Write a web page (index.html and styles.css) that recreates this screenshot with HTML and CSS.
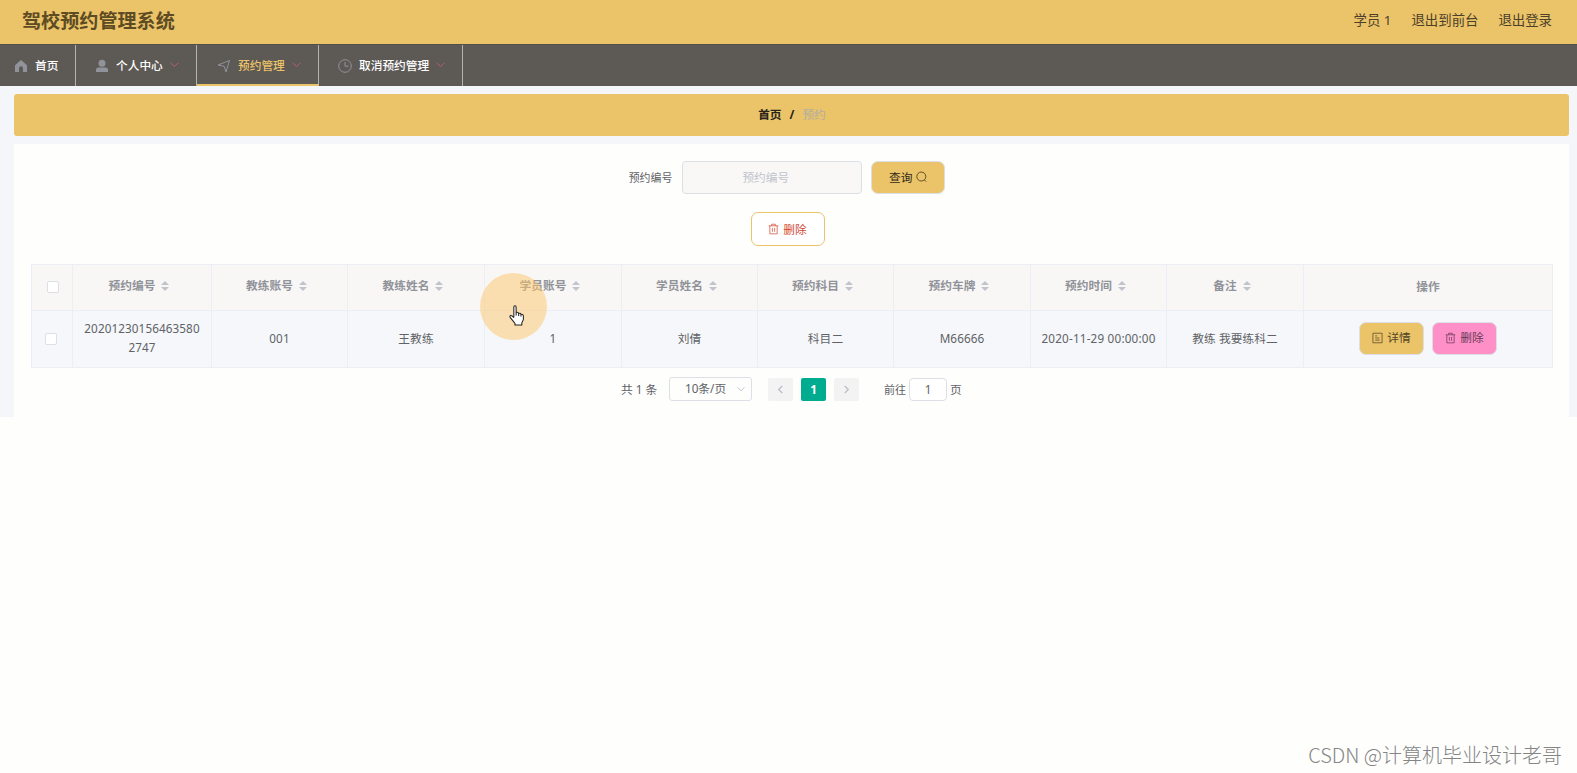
FILE: index.html
```
<!DOCTYPE html>
<html lang="zh-CN">
<head>
  <meta charset="UTF-8" />
  <title>驾校预约管理系统</title>
  <meta name="viewport" content="width=device-width, initial-scale=1" />
  <link rel="stylesheet" href="styles.css">
</head>
<body>
  <!-- Shared icons -->
  <svg class="sprite">
    <symbol id="i-trash" viewBox="0 0 12 12"><path d="M.8 2.500h10.400M4 2.500V.8h4v1.700M2 2.500V11.300h8V2.500M4.800 4.800v4.200M7.200 4.800v4.200"/></symbol>
    <symbol id="i-down" viewBox="0 0 10 10"><path d="M.7 3L5 7.300 9.300 3"/></symbol>
    <symbol id="i-sort" viewBox="0 0 8 10"><path d="M4 0l4 4H0zM4 10l4-4H0z"/></symbol>
  </svg>

  <header class="top">
    <h1>驾校预约管理系统</h1>
    <div class="user">
      <span>学员 1</span>
      <span>退出到前台</span>
      <span>退出登录</span>
    </div>
  </header>

  <nav class="menu">
    <a class="item home">
      <svg class="ico solid" viewBox="0 0 14 14"><path d="M7 1L1 6.300V13h4V9.200a2 2 0 0 1 4 0V13h4V6.300z"/></svg>
      <span>首页</span>
    </a>
    <a class="item person">
      <svg class="ico solid" viewBox="0 0 14 14"><circle cx="7" cy="4.200" r="3.500"/><path d="M1 13v-2q0-2.500 2.500-2.500h7Q13 8.500 13 11v2z"/></svg>
      <span>个人中心</span>
      <svg class="arrow"><use href="#i-down"/></svg>
    </a>
    <a class="item active">
      <svg class="ico" viewBox="0 0 14 14"><path d="M1 6L12.500 1.500 9 13 7.200 7.300z"/></svg>
      <span>预约管理</span>
      <svg class="arrow"><use href="#i-down"/></svg>
    </a>
    <a class="item cancel">
      <svg class="ico" viewBox="0 0 14 14"><circle cx="7" cy="7" r="6.300"/><path d="M7 3v4.200h3.600"/></svg>
      <span>取消预约管理</span>
      <svg class="arrow"><use href="#i-down"/></svg>
    </a>
  </nav>

  <main class="main">
    <div class="crumb"><b>首页</b><b>/</b><span>预约</span></div>

    <section class="panel">
      <div class="search">
        <label for="no">预约编号</label>
        <input id="no" placeholder="预约编号" />
        <button class="btn">查询 <svg class="find" viewBox="0 0 12 12"><circle cx="5.800" cy="5.500" r="4.900"/><path d="M9.300 9.300l1.700 1.700"/></svg></button>
      </div>
      <div class="tools">
        <button class="btn outline"><svg><use href="#i-trash"/></svg> 删除</button>
      </div>

      <table>
        <colgroup>
          <col class="c-check"><col class="c-no"><col class="c-136"><col class="c-137"><col class="c-137"><col class="c-136"><col class="c-136"><col class="c-137"><col class="c-136"><col class="c-137"><col>
        </colgroup>
        <thead>
          <tr>
            <th><i class="check"></i></th>
            <th>预约编号<svg><use href="#i-sort"/></svg></th>
            <th>教练账号<svg><use href="#i-sort"/></svg></th>
            <th>教练姓名<svg><use href="#i-sort"/></svg></th>
            <th>学员账号<svg><use href="#i-sort"/></svg></th>
            <th>学员姓名<svg><use href="#i-sort"/></svg></th>
            <th>预约科目<svg><use href="#i-sort"/></svg></th>
            <th>预约车牌<svg><use href="#i-sort"/></svg></th>
            <th>预约时间<svg><use href="#i-sort"/></svg></th>
            <th>备注<svg><use href="#i-sort"/></svg></th>
            <th>操作</th>
          </tr>
        </thead>
        <tbody>
          <tr>
            <td><i class="check"></i></td>
            <td>202012301564635802747</td>
            <td>001</td>
            <td>王教练</td>
            <td>1</td>
            <td>刘倩</td>
            <td>科目二</td>
            <td>M66666</td>
            <td class="time">2020-11-29 00:00:00</td>
            <td>教练 我要练科二</td>
            <td>
              <div class="ops">
                <button class="btn small"><svg viewBox="0 0 12 12"><path d="M1 .8h10v10.400H1zM3.500 3.700h2M3.500 6h4.500M3.500 8.300h5"/></svg> 详情</button>
                <button class="btn small pink"><svg><use href="#i-trash"/></svg> 删除</button>
              </div>
            </td>
          </tr>
        </tbody>
      </table>

      <div class="pager">
        <span class="total">共 1 条</span>
        <div class="size"><span>10条/页</span><svg><use href="#i-down"/></svg></div>
        <button class="page"><svg viewBox="0 0 10 10"><path d="M7 1L3 5l4 4"/></svg></button>
        <button class="page on">1</button>
        <button class="page"><svg viewBox="0 0 10 10"><path d="M3 1l4 4-4 4"/></svg></button>
        <span class="goto">前往</span>
        <input value="1" />
        <span>页</span>
      </div>
    </section>
  </main>

  <!-- Click highlight and pointer -->
  <div class="spot"></div>
  <svg class="hand" viewBox="0 0 16 20"><path d="M4.500 12V2.200q0-1.400 1.100-1.400t1.100 1.400v5q2-.7 2.400.8 1.800-.5 2.200.9 2.300-.4 2.300 1.700V14l-1.500 3v2H5.600v-1.500L1.200 12q-1-1.500.3-2 1-.3 3 2M6.700 7v3M9.100 8v2.500M11.300 9v2"/></svg>
  <div class="mark">CSDN @计算机毕业设计老哥</div>
</body>
</html>
```
FILE: styles.css
```
:root {
  --gold: #ebc368;
  --line: #ebeef5;
  font-family: "Noto Sans", "Noto Sans CJK SC", sans-serif;
}
* { box-sizing: border-box; margin: 0; padding: 0; }
body {
  height: 100vh;
  overflow: hidden;
  background: #fefefd;
  color: #606266;
  font-size: 11.7px;
}
svg { fill: none; stroke: currentColor; }
button, input { font: inherit; }
.sprite { display: none; }

/* header */
.top {
  height: 44px;
  padding: 0 25px 5px 22px;
  display: flex;
  align-items: center;
  justify-content: space-between;
  background: var(--gold);
}
h1 { font-size: 19.1px; font-weight: 600; color: #5d4b23; }
.user { display: flex; gap: 20px; padding-bottom: 1px; font-size: 13.4px; color: #4b402a; }

/* menu */
.menu {
  display: flex;
  height: 42px;
  background: #5d5a56;
  border-top: 1px solid #514f50;
}
.item {
  display: flex;
  align-items: center;
  width: 122px;
  padding-left: 20px;
  color: #fff;
  font-weight: 500;
  border-right: 1px solid #b5b3b0;
}
.item span { padding-bottom: 2px; }
.item.home { width: 76px; padding-left: 14px; }
.item.person { width: 121px; padding-left: 19px; }
.item.cancel { width: 144px; padding-left: 19px; }
.item.active { color: var(--gold); border-bottom: 2px solid var(--gold); padding-top: 2px; }
.ico { width: 14px; height: 14px; margin-right: 7px; color: #909399; }
.ico.solid { fill: #909399; stroke: none; }
.arrow { width: 9px; height: 9px; margin: 0 0 2px 7px; color: #c45c80; }

/* content */
.main { height: 331px; padding: 8px 8px 0 14px; background: #f4f6fa; }
.crumb {
  height: 42px;
  margin-bottom: 8px;
  padding: 0 0 3px 1px;
  display: flex;
  align-items: center;
  justify-content: center;
  gap: 8px;
  border-radius: 3px;
  background: var(--gold);
  color: #26231b;
}
.crumb span { color: #b1aea3; }
.panel { height: 273px; padding: 17px 17px 0; background: #fefefd; }
.search { display: flex; align-items: center; justify-content: center; padding-right: 9px; }
.search label { font-size: 10.9px; margin-right: 10px; padding-bottom: 2px; }
.search input {
  width: 180px;
  height: 33px;
  margin-right: 9px;
  padding: 0 13px 2px 0;
  text-align: center;
  background: #f9f8f7;
  border: 1px solid #dcdfe6;
  border-radius: 4px;
}
.search input::placeholder { color: #c0c4cc; }
.tools { display: flex; justify-content: center; padding: 18px 8px 18px 0; }
.btn {
  display: flex;
  align-items: center;
  justify-content: center;
  gap: 4px;
  width: 74px;
  height: 33px;
  padding-bottom: 2px;
  background: var(--gold);
  border: 1px solid #dcdfe6;
  border-radius: 7px;
  color: #2f2818;
}
.btn svg { width: 11px; height: 12px; margin-top: 1px; stroke-width: .8; }
.btn.outline { width: 74px; height: 34px; background: #fff; border-color: var(--gold); color: #d3482f; }
.btn.small { width: 65px; height: 33px; color: #514528; }
.btn.pink { background: #ff8fc7; color: #653b57; }

/* table */
table {
  width: 1522px;
  table-layout: fixed;
  border-spacing: 0;
  border: solid var(--line);
  border-width: 1px 0 0 1px;
}
th, td {
  padding: 0 9px 2px;
  text-align: center;
  line-height: 19px;
  border: solid var(--line);
  border-width: 0 1px 1px 0;
  word-break: break-all;
}
th { height: 46px; padding: 0 13px 4px 7px; background: #f9f7f6; color: #909399; font-weight: 600; }
td { height: 57px; background: #f5f7fa; letter-spacing: .1px; }
td.time { padding: 0 5px 2px; letter-spacing: .2px; }
th svg { width: 8px; height: 10px; margin-left: 6px; vertical-align: -1px; fill: #c0c4cc; stroke: none; }
.c-check { width: 41px; }
.c-no { width: 139px; }
.c-136 { width: 136px; }
.c-137 { width: 137px; }
th:first-child { padding: 0; }
td:first-child { padding: 0 3px 1px 0; }
th:last-child { padding: 0 0 2px; }
.check {
  display: block;
  width: 12px;
  height: 12px;
  margin: 0 auto;
  background: #fff;
  border: 1px solid #dcdfe6;
  border-radius: 2px;
}
th .check { margin-top: -1px; margin-left: 15px; }
.ops { display: flex; justify-content: center; gap: 8px; }

/* pagination */
.pager { display: flex; align-items: center; padding: 9px 0 10px 590px; height: 43px; }
.pager span { padding-bottom: 1px; }
.total { width: 48px; }
.size {
  display: flex;
  align-items: center;
  width: 83px;
  height: 24px;
  margin-right: 16px;
  padding-left: 15px;
  border: 1px solid #dcdfe6;
  border-radius: 3px;
}
.size span { padding-bottom: 3px; }
.size svg { width: 8px; height: 8px; margin-left: auto; margin-right: 6px; color: #b6bac2; }
.page {
  display: flex;
  align-items: center;
  justify-content: center;
  width: 25px;
  height: 23px;
  margin-right: 8px;
  border: none;
  border-radius: 2px;
  background: #f3f3f4;
  color: #b6b9c0;
}
.page svg { width: 9px; height: 9px; stroke-width: 1.3; }
.page.on { background: #00ac90; color: #fff; font-weight: 700; }
.goto { margin-left: 17px; font-size: 11px; }
.pager input {
  width: 38px;
  height: 23px;
  margin: 0 3px;
  text-align: center;
  color: #606266;
  background: #fff;
  border: 1px solid #dcdfe6;
  border-radius: 4px;
}

/* overlays */
.spot {
  position: absolute;
  left: 480px;
  top: 273px;
  width: 67px;
  height: 67px;
  border-radius: 50%;
  background: rgba(254, 198, 104, .5);
}
.hand { position: absolute; left: 509px; top: 305px; width: 17px; height: 21px; fill: #fff; stroke: #222; }
.mark {
  position: absolute;
  right: 15px;
  bottom: 4px;
  font-family: "Noto Sans CJK SC", sans-serif;
  font-size: 20px;
  font-weight: 300;
  color: #858585;
}
```
